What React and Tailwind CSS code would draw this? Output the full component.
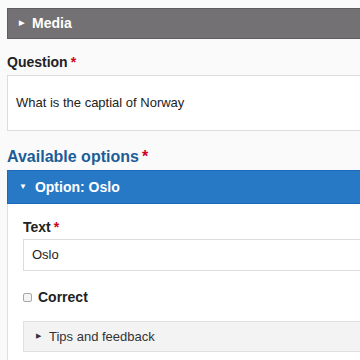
import React from 'react';

const Req = () => <span className="text-[#d0021b] ml-[3px]">*</span>;

export default function App() {
    return (
        <div className="w-[360px] h-[360px] overflow-hidden bg-[#fafafa] pl-[7px] pt-[8px] text-[#222]" style={{ fontFamily: '"Liberation Sans", Arial, sans-serif' }}>
            {/* Media */}
            <div className="h-[31px] bg-[#737173] border border-r-0 border-[#5f5d5f] flex items-center pl-[11px] text-white font-bold text-[14px]">
                <span className="text-[7px] mr-[8px]">▶</span>
                Media
            </div>

            {/* Question */}
            <div className="mt-[15px] font-bold text-[14px] leading-[16px]">Question<Req /></div>
            <div className="mt-[5px] h-[56px] bg-white border border-r-0 border-[#dcdcdc] flex items-center pl-[8px] text-[13px]">
                What is the captial of Norway
            </div>

            {/* Available options */}
            <div className="mt-[17px] font-bold text-[16px] leading-[18px] text-[#1d5d97]">Available options<Req /></div>
            <div className="mt-[4px] h-[34px] bg-[#2779c6] border border-r-0 border-[#1a69bd] flex items-center pl-[11px] text-white font-bold text-[14px]">
                <span className="text-[8px] mr-[8px]">▼</span>
                Option: Oslo
            </div>
            <div className="bg-white border-l border-[#e0e0e0] pl-[15px] pt-[15px] pb-[12px]">
                <div className="font-bold text-[14px] leading-[16px]">Text<Req /></div>
                <div className="mt-[4px] h-[32px] border border-r-0 border-[#dcdcdc] flex items-center pl-[8px] text-[13px]">
                    Oslo
                </div>
                <div className="mt-[16px] flex items-center">
                    <span className="w-[9px] h-[9px] border border-[#a8a8a8] rounded-[2px] bg-[#f4f4f4] mr-[6px]" />
                    <span className="font-bold text-[14px]">Correct</span>
                </div>
                <div className="mt-[13px] h-[31px] bg-[#f3f3f3] border border-r-0 border-[#e0e0e0] flex items-center pl-[12px] text-[13px] text-[#333]">
                    <span className="text-[7px] mr-[8px]">▶</span>
                    Tips and feedback
                </div>
            </div>
        </div>
    );
}
